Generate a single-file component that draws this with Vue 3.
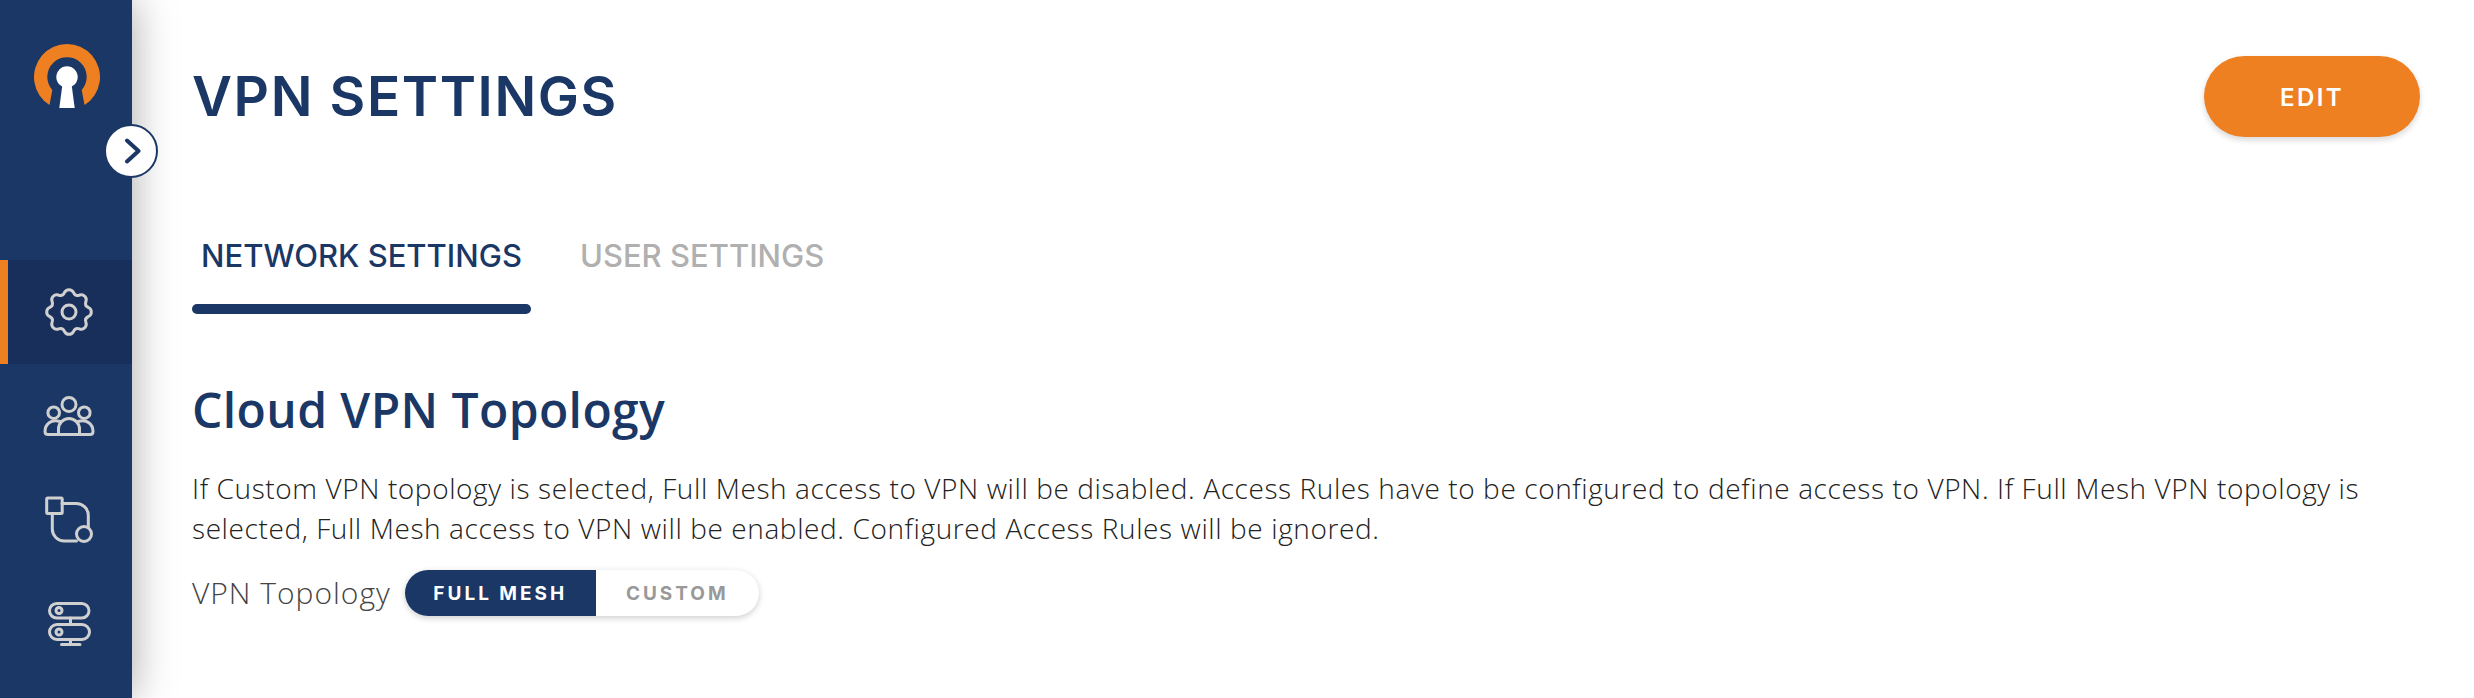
<template>
  <div class="layout">
    <aside class="sidebar">
      <div class="logo">
        <svg width="66" height="64" viewBox="34 44 66 64">
          <path fill="#ef8022" d="M49.5 105A33 33 0 1 1 84.5 105L81.7 90A19.7 19.7 0 1 0 52.3 90Z" />
          <circle cx="67" cy="77" r="10.7" fill="#fff" />
          <path fill="#fff" d="M62.5 84H71.5L74.7 108H59.3Z" />
        </svg>
      </div>
      <button class="collapse">
        <svg width="20" height="28" viewBox="0 0 20 28">
          <path d="M6 3.5L17.5 14L6 24.5" />
        </svg>
      </button>
      <nav class="nav">
        <div class="nav-row active">
          <svg width="56" height="56" viewBox="0 0 56 56">
            <path :d="gearPath" />
            <circle cx="28" cy="28" r="7" />
          </svg>
        </div>
        <div class="nav-row">
          <svg width="56" height="44" viewBox="41 394 56 44">
            <circle cx="69" cy="404.5" r="7" />
            <circle cx="53.7" cy="412.7" r="5.8" />
            <circle cx="84.3" cy="412.7" r="5.8" />
            <path d="M58.5 434.5V429A10.5 10.5 0 0 1 79.5 429V434.5Z" />
            <path d="M60 421.5C51 419 45 424 45 431.5C45 433.5 46 434.5 48 434.5H58.5" />
            <path d="M78 421.5C87 419 93 424 93 431.5C93 433.5 92 434.5 90 434.5H79.5" />
          </svg>
        </div>
        <div class="nav-row">
          <svg width="56" height="50" viewBox="41 495 56 50">
            <rect x="46.7" y="498" width="15.5" height="15.5" rx="1" />
            <path d="M62 503.5H76A12 12 0 0 1 88.3 515.5V527" />
            <path d="M52.3 514V529A12 12 0 0 0 64.3 541H76.5" />
            <circle cx="84" cy="534" r="7.5" />
          </svg>
        </div>
        <div class="nav-row">
          <svg width="56" height="52" viewBox="41 598 56 52">
            <rect x="49.5" y="603.5" width="39.5" height="14.5" rx="7.25" />
            <rect x="49.5" y="624.5" width="40" height="15" rx="7.5" />
            <circle cx="59" cy="610.5" r="3" />
            <circle cx="59" cy="632" r="3" />
            <path d="M70.5 618V624.5M70.5 639.5V644.5M61.5 644.5H80" />
          </svg>
        </div>
      </nav>
    </aside>

    <main class="content">
      <header class="page-head">
        <h1>VPN SETTINGS</h1>
        <button class="edit">EDIT</button>
      </header>

      <div class="tabs">
        <div class="tab current">NETWORK SETTINGS</div>
        <div class="tab">USER SETTINGS</div>
      </div>

      <section class="topology">
        <h2>Cloud VPN Topology</h2>
        <p>
          If Custom VPN topology is selected, Full Mesh access to VPN will be disabled. Access Rules have to be
          configured to define access to VPN. If Full Mesh VPN topology is selected, Full Mesh access to VPN will be
          enabled. Configured Access Rules will be ignored.
        </p>
        <div class="field">
          <span class="field-label">VPN Topology</span>
          <div class="switch">
            <span class="opt on">FULL MESH</span>
            <span class="opt">CUSTOM</span>
          </div>
        </div>
      </section>
    </main>
  </div>
</template>

<script setup>
// scalloped gear outline, 8 lobes
function buildGear() {
  const c = 28;
  const pt = (deg, r) => {
    const a = (deg * Math.PI) / 180;
    return (c + r * Math.cos(a)).toFixed(2) + " " + (c + r * Math.sin(a)).toFixed(2);
  };
  let d = "";
  for (let i = 0; i < 8; i++) {
    const a = -90 + i * 45;
    d += (i === 0 ? "M" : "L") + pt(a - 13, 20);
    d += "A5 5 0 0 1 " + pt(a + 13, 20);
    d += "Q" + pt(a + 22.5, 16.5) + " " + pt(a + 32, 20);
  }
  return d + "Z";
}

const gearPath = buildGear();
</script>

<style>
html,
body {
  margin: 0;
  background: #fff;
  overflow: hidden;
}
</style>

<style scoped>
.layout {
  display: flex;
  height: 698px;
  width: 2474px;
  overflow: hidden;
}
.sidebar {
  position: relative;
  width: 132px;
  flex: none;
  background: #1a3766;
  box-shadow: 0 0 40px rgba(0, 0, 0, 0.35);
  z-index: 1;
}
.logo {
  display: flex;
  justify-content: center;
  padding-top: 44px;
  height: 216px;
  box-sizing: border-box;
  margin-left: 2px;
}
.collapse {
  position: absolute;
  left: 104px;
  top: 124px;
  width: 54px;
  height: 54px;
  padding: 0;
  border: 2px solid #1a3766;
  border-radius: 50%;
  background: #fff;
  display: flex;
  align-items: center;
  justify-content: center;
}
.collapse path {
  fill: none;
  stroke: #1a3766;
  stroke-width: 4;
  stroke-linecap: round;
  stroke-linejoin: round;
}
.nav {
  margin-top: 44px;
}
.nav-row {
  height: 104px;
  padding-left: 6px;
  box-sizing: border-box;
  display: flex;
  align-items: center;
  justify-content: center;
}
.nav-row.active {
  background: #182f5b;
  box-shadow: inset 8px 0 0 #ef8022;
}
.nav-row svg * {
  fill: none;
  stroke: #d0d0d0;
  stroke-width: 3;
  stroke-linejoin: round;
  stroke-linecap: round;
}
.content {
  flex: 1;
  padding: 0 54px 0 60px;
  min-width: 0;
}
.page-head {
  display: flex;
  justify-content: space-between;
  align-items: flex-start;
  padding-top: 56px;
}
h1 {
  margin: 0;
  font: 600 55px/81px "Inter", sans-serif;
  letter-spacing: 1.6px;
  color: #1a3766;
}
.edit {
  width: 216px;
  height: 81px;
  padding: 2px 0 0;
  border: 0;
  border-radius: 41px;
  background: #ef8022;
  color: #fff;
  font: 600 24px "Inter", sans-serif;
  letter-spacing: 2.4px;
  box-shadow: 0 3px 6px rgba(0, 0, 0, 0.16);
}
.tabs {
  display: flex;
  gap: 40px;
  margin-top: 85px;
}
.tab {
  position: relative;
  padding: 0 9px;
  height: 92px;
  box-sizing: border-box;
  font: 500 31px/68px "Inter", sans-serif;
  color: #b0b0b0;
}
.tab.current {
  color: #1a3766;
}
.tab.current::after {
  content: "";
  position: absolute;
  left: 0;
  right: 0;
  bottom: 0;
  height: 10px;
  border-radius: 5px;
  background: #1a3766;
}
.topology {
  margin-top: 66px;
}
h2 {
  margin: 0;
  font: 600 48px/60px "Open Sans", sans-serif;
  letter-spacing: 0.4px;
  color: #1a3766;
}
p {
  margin: 28px 0 0;
  font: 300 28px/40px "Open Sans", sans-serif;
  letter-spacing: 0.6px;
  color: #222;
}
.field {
  display: flex;
  align-items: center;
  gap: 14px;
  margin-top: 22px;
}
.field-label {
  font: 300 30px/40px "Open Sans", sans-serif;
  letter-spacing: 1px;
  color: #444;
}
.switch {
  display: flex;
  width: 354px;
  height: 46px;
  border-radius: 23px;
  overflow: hidden;
  background: #fff;
  box-shadow: 0 2px 6px rgba(0, 0, 0, 0.2);
}
.opt {
  flex: 1;
  display: flex;
  align-items: center;
  justify-content: center;
  font: 700 19px "Inter", sans-serif;
  letter-spacing: 3px;
  color: #999;
}
.opt.on {
  flex: none;
  width: 191px;
  background: #1a3766;
  color: #fff;
}
</style>
